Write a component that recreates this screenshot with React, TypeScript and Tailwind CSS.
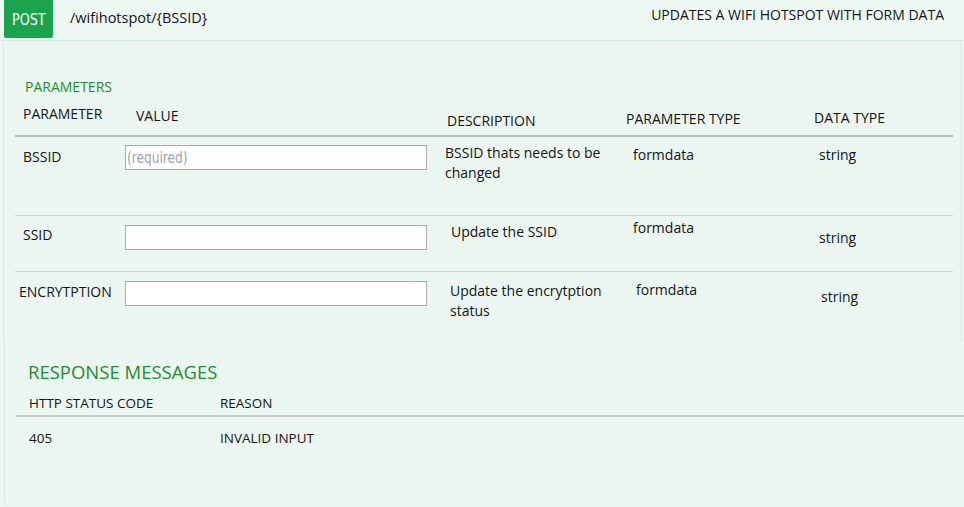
import React from "react";

const font = "font-['Open_Sans',sans-serif]";

function Row({
  name,
  nameMt,
  nameMl = "ml-[23px]",
  inputMt,
  placeholder,
  desc,
  descMt,
  descMl,
  ptMt,
  ptMl,
  dtMt,
  dtMl,
  h,
}: {
  name: string;
  nameMt: string;
  nameMl?: string;
  inputMt: string;
  placeholder?: string;
  desc: React.ReactNode;
  descMt: string;
  descMl: string;
  ptMt: string;
  ptMl: string;
  dtMt: string;
  dtMl: string;
  h: string;
}) {
  return (
    <div className={`flex items-start ${h}`}>
      <div className={`w-[125px] shrink-0 ${nameMt}`}>
        <span className={`${nameMl} block text-[14px] leading-[16px] text-[#141414]`}>{name}</span>
      </div>
      <div
        className={`${inputMt} w-[302px] h-[25px] shrink-0 bg-white border border-[#a9abad] flex items-center overflow-hidden`}
      >
        {placeholder && (
          <span className="inline-block origin-left scale-x-[0.76] ml-[1px] text-[16px] leading-[20px] font-['DejaVu_Sans',sans-serif] text-[#9fa2aa] whitespace-nowrap">
            {placeholder}
          </span>
        )}
      </div>
      <div className={`${descMl} ${descMt} w-[170px] shrink-0 text-[14px] leading-[20px] text-[#141414]`}>{desc}</div>
      <div className={`${ptMl} ${ptMt} w-[130px] shrink-0 text-[14px] leading-[16px] text-[#141414]`}>formdata</div>
      <div className={`${dtMl} ${dtMt} text-[14px] leading-[16px] text-[#141414]`}>string</div>
    </div>
  );
}

export default function App() {
  return (
    <div className={`w-[964px] h-[507px] bg-[#ebf6f0] overflow-hidden ${font} text-[#141414]`}>
      {/* header */}
      <div className="h-[41px] flex items-start border-b border-[#cdecdb] bg-[#eef8f3]">
        <div className="ml-[4px] w-[49px] h-[38px] bg-[#19a44d] rounded-b-[2px] flex items-center justify-center">
          <span className="inline-block scale-x-[0.85] text-white text-[15px] font-['DejaVu_Sans',sans-serif] mt-[2px]">POST</span>
        </div>
        <div className="ml-[17px] mt-[8px] text-[14.5px] leading-[20px]">/wifihotspot/{"{BSSID}"}</div>
        <div className="ml-auto mr-[20px] mt-[6px] text-[14px] leading-[18px]">UPDATES A WIFI HOTSPOT WITH FORM DATA</div>
      </div>

      <div className="ml-[3px] mr-[2px] border-l border-r border-[#d3ecdf] h-[300px]">
        <div className="pt-[38px] pl-[21px] text-[14px] leading-[16px] text-[#1b8f2c]">PARAMETERS</div>
        {/* column headers */}
        <div className="flex items-start h-[36px] mt-[4px]">
          <div className="w-[122px] shrink-0 mt-[7px] pl-[19px] text-[14px] leading-[16px]">PARAMETER</div>
          <div className="w-[321px] shrink-0 mt-[9px] pl-[10px] text-[14px] leading-[16px]">VALUE</div>
          <div className="w-[179px] shrink-0 mt-[14px] text-[14px] leading-[16px]">DESCRIPTION</div>
          <div className="w-[188px] shrink-0 mt-[12px] text-[14px] leading-[16px]">PARAMETER TYPE</div>
          <div className="mt-[11px] text-[14px] leading-[16px]">DATA TYPE</div>
        </div>
        <div className="ml-[11px] w-[938px] h-[2px] bg-[#b7bbb9]" />

        <div className="ml-[-4px]">
          <Row
            name="BSSID"
            nameMt="mt-[12px]"
            inputMt="mt-[8px]"
            placeholder="(required)"
            desc={<>BSSID thats needs to be<br />changed</>}
            descMt="mt-[6px]"
            descMl="ml-[18px]"
            ptMt="mt-[10px]"
            ptMl="ml-[18px]"
            dtMt="mt-[10px]"
            dtMl="ml-[56px]"
            h="h-[78px]"
          />
          <div className="ml-[15px] w-[938px] h-[1px] bg-[#cfd3d1]" />
          <Row
            name="SSID"
            nameMt="mt-[11px]"
            inputMt="mt-[9px]"
            desc="Update the SSID"
            descMt="mt-[6px]"
            descMl="ml-[24px]"
            ptMt="mt-[4px]"
            ptMl="ml-[12px]"
            dtMt="mt-[14px]"
            dtMl="ml-[56px]"
            h="h-[55px]"
          />
          <div className="ml-[15px] w-[938px] h-[1px] bg-[#cfd3d1]" />
          <Row
            name="ENCRYTPTION"
            nameMl="ml-[19px]"
            nameMt="mt-[12px]"
            inputMt="mt-[9px]"
            desc={<>Update the encrytption<br />status</>}
            descMt="mt-[9px]"
            descMl="ml-[23px]"
            ptMt="mt-[10px]"
            ptMl="ml-[16px]"
            dtMt="mt-[17px]"
            dtMl="ml-[55px]"
            h="h-[56px]"
          />
        </div>
      </div>

      {/* response messages */}
      <div className="ml-[4px] border-l border-[#d3ecdf] h-[166px] rounded-bl-[6px]">
        <div className="pt-[19px] pl-[23px] text-[18.5px] leading-[24px] text-[#1b8f2c]">RESPONSE MESSAGES</div>
        <div className="flex mt-[11px] h-[20px]">
          <div className="w-[215px] shrink-0 pl-[24px] text-[13.5px] leading-[16px]">HTTP STATUS CODE</div>
          <div className="text-[13.5px] leading-[16px]">REASON</div>
        </div>
        <div className="ml-[11px] h-[2px] bg-[#c4c8c6]" />
        <div className="flex mt-[13px]">
          <div className="w-[215px] shrink-0 pl-[24px] text-[13.5px] leading-[16px]">405</div>
          <div className="text-[13.5px] leading-[16px]">INVALID INPUT</div>
        </div>
      </div>
    </div>
  );
}
